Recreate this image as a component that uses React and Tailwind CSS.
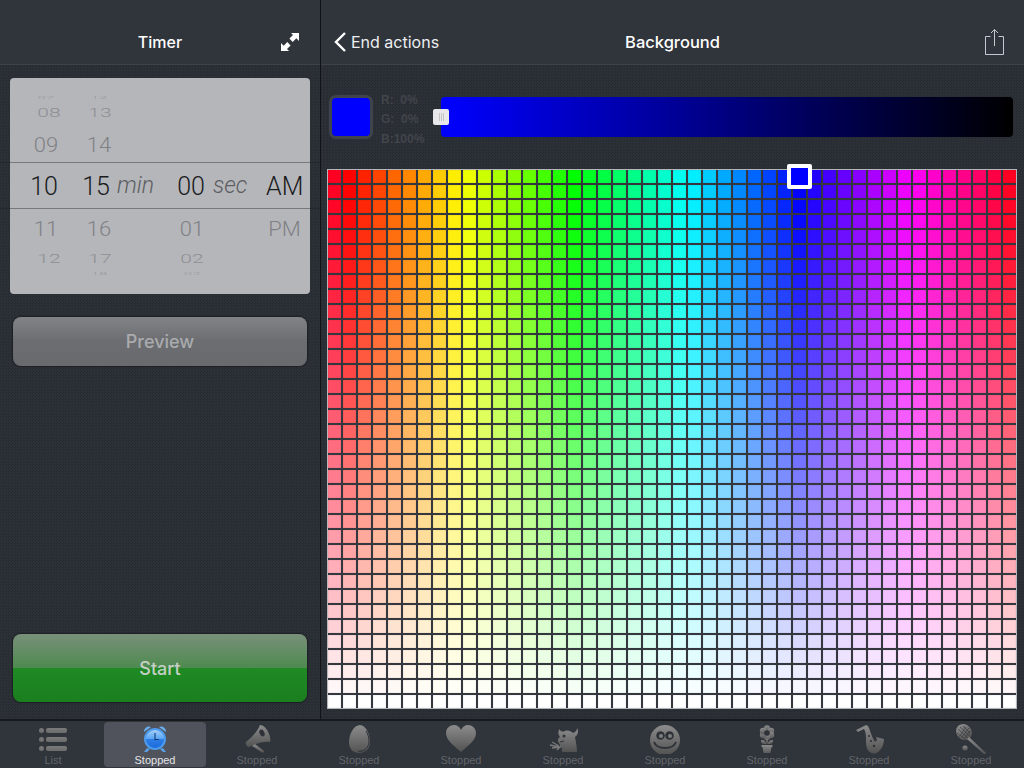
import React from 'react';

const texture = 'bg-[#2c3037] bg-[linear-gradient(45deg,rgba(0,0,0,0.16)_25%,transparent_25%,transparent_75%,rgba(0,0,0,0.16)_75%)] bg-[length:3px_3px]';

const COLS = 46;
const ROWS = 36;

function cellColor(row, col) {
  const hue = (col - 1 + 360) * 8;
  const t = Math.pow(row / (ROWS - 1), 1.3);
  const light = 50 + 50 * t;
  return `hsl(${hue}, 100%, ${light}%)`;
}

function ColorGrid() {
  const cells = [];
  for (let r = 0; r < ROWS; r++) {
    for (let c = 0; c < COLS; c++) {
      cells.push(
        <div key={`${r}-${c}`} className="shadow-[inset_0_0_1px_rgba(0,0,0,0.35)]" style={{ backgroundColor: cellColor(r, c) }} />
      );
    }
  }
  return (
    <div className="relative ml-[6px] w-[690px] border border-[#b4b6ba] bg-[#34373e]">
      <div className="grid grid-cols-[repeat(46,13px)] grid-rows-[repeat(36,13px)] gap-[2px]">{cells}</div>
      <div className="absolute left-[459px] top-[-6px] h-[25px] w-[25px] rounded-[2px] border-[4px] border-white bg-[#0000ff]" />
    </div>
  );
}

const wheelFont = "font-['Roboto',sans-serif] font-light";

function Far({ children, pad }) {
  return <div className={`flex h-full scale-y-[0.58] items-center justify-center text-[21px] text-[#8e8f93] ${pad}`}>{children}</div>;
}

function Near({ children }) {
  return <div className="flex h-full items-center justify-center pt-[5px]"><span className="scale-y-[0.88] text-[22px] text-[#808185]">{children}</span></div>;
}

function Sliver({ children }) {
  return <div className="flex h-full scale-y-[0.22] items-center justify-center text-[15px] text-[#9a9b9f]">{children}</div>;
}

function WheelCol({ w, shift, farShift, items }) {
  return (
    <div className={`grid grid-rows-[8px_22px_38px_47px_36px_26px_7px] ${w}`}>
      <Sliver>{items[0]}</Sliver>
      <Far pad={`pt-[2px] ${farShift}`}>{items[1]}</Far>
      <Near>{items[2]}</Near>
      <div className={`flex items-center justify-center pt-[2px] text-[25px] text-[#1a1b1d] ${shift}`}>{items[3]}</div>
      <Near>{items[4]}</Near>
      <Far pad={`pt-[4px] ${farShift}`}>{items[5]}</Far>
      <Sliver>{items[6]}</Sliver>
    </div>
  );
}

function TimePicker() {
  return (
    <div className="relative mx-[10px] mt-[13px] h-[216px] rounded-[4px] bg-[#b5b6ba] pt-[16px]">
      <div className="absolute left-[-10px] right-[-10px] top-[84px] h-[47px] border-y border-[#1f2126]/60" />
      <div className="absolute left-0 right-0 top-[84px] h-[47px] border-y border-[#77787c]" />
      <div className={`relative flex ${wheelFont}`}>
        <WheelCol w="w-[72px]" shift="pr-[4px]" farShift="pl-[6px]" items={['07', '08', '09', '10', '11', '12', '']} />
        <WheelCol w="w-[34px]" shift="pr-[6px]" farShift="pl-[2px]" items={['12', '13', '14', '15', '16', '17', '18']} />
        <div className="w-[58px]">
          <div className="mt-[68px] flex h-[47px] items-center pl-[1px] pt-[2px] text-[23px] italic text-[#5d5e62]">min</div>
        </div>
        <WheelCol w="w-[36px]" shift="pr-[2px]" farShift="" items={['', '', '', '00', '01', '02', '03']} />
        <div className="w-[56px]">
          <div className="mt-[68px] flex h-[47px] items-center pl-[3px] pt-[2px] text-[23px] italic text-[#5d5e62]">sec</div>
        </div>
        <WheelCol w="w-[36px]" shift="" farShift="" items={['', '', '', 'AM', 'PM', '', '']} />
      </div>
    </div>
  );
}

function GlossButton({ label, h, tone, text }) {
  return (
    <div className={`flex items-center justify-center overflow-hidden rounded-[8px] mx-[13px] shadow-[0_0_1px_1px_rgba(20,22,26,0.6)] ${h} ${tone}`}>
      <span className={`font-['Inter',sans-serif] text-[18px] font-medium ${text}`}>{label}</span>
    </div>
  );
}

function TabSvg({ id, children, from = '#8c8c8c', to = '#525252' }) {
  return (
    <svg width="40" height="32" viewBox="0 0 40 32">
      <defs>
        <linearGradient id={id} x1="0" y1="0" x2="0" y2="1">
          <stop offset="0" stopColor={from} />
          <stop offset="1" stopColor={to} />
        </linearGradient>
      </defs>
      <g fill={`url(#${id})`}>{children}</g>
    </svg>
  );
}

const ListIcon = () => (
  <TabSvg id="g-list" from="#7a7a7a" to="#6c6c6c">
    <rect x="6" y="6" width="5" height="5" rx="2.5" />
    <rect x="13" y="6" width="21" height="5" rx="2" />
    <rect x="6" y="15" width="5" height="5" rx="2.5" />
    <rect x="13" y="15" width="21" height="5" rx="2" />
    <rect x="6" y="24" width="5" height="5" rx="2.5" />
    <rect x="13" y="24" width="21" height="5" rx="2" />
  </TabSvg>
);

const ClockIcon = () => (
  <svg width="40" height="32" viewBox="0 0 40 32">
    <defs>
      <linearGradient id="g-clock" x1="0" y1="0" x2="0" y2="1">
        <stop offset="0" stopColor="#a4cffa" />
        <stop offset="0.48" stopColor="#5aa5f2" />
        <stop offset="0.5" stopColor="#2f7fe6" />
        <stop offset="1" stopColor="#1b6adc" />
      </linearGradient>
    </defs>
    <path d="M9 10a5 5 0 0 1 7-5zM31 10a5 5 0 0 0-7-5z" fill="#6aaef0" />
    <path d="M12 26l-3 4h3l3-3zM28 26l3 4h-3l-3-3z" fill="#5b9fe6" />
    <circle cx="20" cy="17" r="11" fill="#4e9bec" />
    <circle cx="20" cy="17" r="9" fill="url(#g-clock)" />
    <path d="M20 11v6.5h4" fill="none" stroke="#123a78" strokeWidth="1.1" />
  </svg>
);

const HornIcon = () => (
  <TabSvg id="g-horn">
    <path d="M23 3C28 2 35 14 33 20 27 19 18 22 12 25 10 25 8 22 9 20 14 16 20 10 23 3z" />
    <ellipse cx="25" cy="11" rx="2.4" ry="3.6" transform="rotate(-25 25 11)" fill="#2f3239" />
    <path d="M15 24l3-2 9 7-1 2z" />
  </TabSvg>
);

const EggIcon = () => (
  <TabSvg id="g-egg">
    <path d="M21 3c6 0 10 10 10 17 0 7-5 11-11 11S10 27 10 20C10 12 15 3 21 3z" />
    <path d="M27 9c3 5 4 11 2 15-2 4-6 6-10 5" fill="none" stroke="#2a2d33" strokeWidth="1" />
  </TabSvg>
);

const HeartIcon = () => (
  <TabSvg id="g-heart">
    <path d="M20 30C12 23 5 18 5 11c0-5 4-8 8-8 3 0 6 2 7 5 1-3 4-5 7-5 4 0 8 3 8 8 0 7-7 12-15 19z" />
  </TabSvg>
);

const DevilIcon = () => (
  <TabSvg id="g-devil">
    <path d="M16 7C18 10 20 10 22 9 25 8 28 9 30 11 33 10 34 8 34 6 36 9 35 13 32 15 33 20 34 26 34 30L19 30C20 26 17 24 16 21 14 19 15 16 17 15 15 13 15 10 16 8z" />
    <circle cx="21" cy="14" r="1.5" fill="#2f3239" />
    <path d="M17 20l4-1" fill="none" stroke="#2f3239" strokeWidth="1" />
    <path d="M9 20l7 4M7 23l9 2M9 26l8-1M18 24l-4 4" fill="none" stroke="#7a7a7a" strokeWidth="1.3" />
  </TabSvg>
);

const SmileIcon = () => (
  <TabSvg id="g-smile">
    <circle cx="20" cy="18" r="15" />
    <circle cx="15.5" cy="13.5" r="4.3" fill="#2f3239" />
    <circle cx="24.5" cy="13.5" r="4.3" fill="#2f3239" />
    <circle cx="16" cy="14" r="2" fill="#7f7f7f" />
    <circle cx="25" cy="14" r="2" fill="#7f7f7f" />
    <path d="M9 20c3 8 19 8 22 0" fill="none" stroke="#2f3239" strokeWidth="2" />
  </TabSvg>
);

const FlowerIcon = () => (
  <TabSvg id="g-flower" from="#8a8a8a" to="#5a5a5a">
    <circle cx="20" cy="6.5" r="3.2" />
    <circle cx="24" cy="9" r="3.2" />
    <circle cx="24" cy="13" r="3.2" />
    <circle cx="20" cy="15" r="3.2" />
    <circle cx="16" cy="13" r="3.2" />
    <circle cx="16" cy="9" r="3.2" />
    <circle cx="20" cy="11" r="2.8" fill="#2f3239" />
    <path d="M19.3 17h1.4v5h-1.4zM14 18c3 0 5 1 5 4h-1c-3 0-4-1-4-4zM26 18c-3 0-5 1-5 4h1c3 0 4-1 4-4z" />
    <path d="M14.5 23h11v2h-1l-1 6h-7l-1-6h-1z" />
  </TabSvg>
);

const SaxIcon = () => (
  <TabSvg id="g-sax">
    <path d="M7 8L17 3 19 4 20 6C22 12 24 17 26 20L28 18 27 15 35 17C35 22 33 26 31 28 29 31 26 32 23 31 19 30 17 26 17 20 17 14 17 10 15 7L9 10z" />
    <circle cx="20" cy="14" r="1" fill="#2f3239" />
    <circle cx="22" cy="19" r="1.1" fill="#2f3239" />
    <circle cx="25" cy="24" r="1.2" fill="#2f3239" />
  </TabSvg>
);

const RacketIcon = () => (
  <TabSvg id="g-racket">
    <ellipse cx="13" cy="10" rx="7.5" ry="8.5" transform="rotate(-40 13 10)" />
    <g stroke="#2f3239" strokeWidth="0.6" fill="none">
      <path d="M7 7l10 9M9 5l10 9M12 4l7 7M6 11l8 6M10 16l8-10M8 15l7-10M13 17l6-8" />
    </g>
    <path d="M18 15l17 16-1.5 1.5L16 17z" />
    <circle cx="14" cy="26" r="2.6" />
  </TabSvg>
);

const tabs = [
  { label: 'List', Icon: ListIcon },
  { label: 'Stopped', Icon: ClockIcon, active: true },
  { label: 'Stopped', Icon: HornIcon },
  { label: 'Stopped', Icon: EggIcon },
  { label: 'Stopped', Icon: HeartIcon },
  { label: 'Stopped', Icon: DevilIcon },
  { label: 'Stopped', Icon: SmileIcon },
  { label: 'Stopped', Icon: FlowerIcon },
  { label: 'Stopped', Icon: SaxIcon },
  { label: 'Stopped', Icon: RacketIcon },
];

function TabBar() {
  return (
    <div className="grid h-[49px] grid-cols-[repeat(10,102px)] border-t-2 border-[#17191d] bg-[#30343b] pl-[2px] pt-[1px]">
      {tabs.map(({ label, Icon, active }, i) => (
        <div key={i} className={`flex h-[45px] flex-col items-center rounded-[4px] ${active ? 'bg-[#50535b]' : ''}`}>
          <div className="h-[32px]"><Icon /></div>
          <span className={`text-[11px] leading-[13px] ${active ? 'text-[#e4e5e8]' : 'text-[#62656a]'}`}>{label}</span>
        </div>
      ))}
    </div>
  );
}

export default function App() {
  return (
    <div className="flex h-[768px] w-[1024px] flex-col overflow-hidden bg-[#2c3037] font-['Liberation_Sans',sans-serif]">
      <div className="flex h-[719px]">
        <div className={`flex w-[321px] flex-col border-r border-[#101215] ${texture}`}>
          <div className="relative flex h-[65px] items-end justify-center border-b border-[#3e4249] bg-[#30343b] pb-[12px]">
            <span className="font-['Inter',sans-serif] text-[16px] font-medium leading-[20px] text-white">Timer</span>
            <svg className="absolute left-[280px] top-[32px]" width="20" height="20" viewBox="0 0 20 20" fill="#fff">
              <path d="M11 1h8v8l-2.7-2.7-3.6 3.6-3.3-3.3 3.6-3.6zM9 19H1v-8l2.7 2.7 3.6-3.6 3.3 3.3-3.6 3.6z" />
            </svg>
          </div>
          <TimePicker />
          <div className="mt-[23px]">
            <GlossButton
              label="Preview"
              h="h-[49px]"
              tone="bg-[linear-gradient(#828387_0%,#6c6d71_50%,#696a6e_100%)]"
              text="text-[#a9abae]"
            />
          </div>
          <div className="mt-auto mb-[17px]">
            <GlossButton
              label="Start"
              h="h-[68px]"
              tone="bg-[linear-gradient(#79907a_0%,#4e8a4f_50%,#1f8a24_50%,#1a7f1f_100%)]"
              text="text-[#c5d0c5]"
            />
          </div>
        </div>
        <div className={`flex flex-1 flex-col ${texture}`}>
          <div className="relative flex h-[65px] items-end justify-center border-b border-[#3e4249] bg-[#30343b] pb-[12px]">
            <div className="absolute left-[12px] top-[30px] flex items-center">
              <svg width="14" height="22" viewBox="0 0 14 22" fill="none" stroke="#fff" strokeWidth="2.4">
                <path d="M12 2L3 11l9 9" />
              </svg>
              <span className="ml-[4px] font-['Inter',sans-serif] text-[16px] text-[#eceef0]">End actions</span>
            </div>
            <span className="font-['Inter',sans-serif] text-[16.5px] font-medium leading-[20px] text-white">Background</span>
            <svg className="absolute right-[20px] top-[28px]" width="20" height="28" viewBox="0 0 20 28" fill="none" stroke="#c4c8d0" strokeWidth="1">
              <path d="M6.5 8.5H1.5v18h18v-18h-5M10.5 18V1.5M7 5l3.5-3.5L14 5" />
            </svg>
          </div>
          <div className="mt-[31px] flex h-[42px] items-center pl-[8px]">
            <div className="h-[44px] w-[44px] rounded-[7px] border-[3px] border-[#3f434b] bg-[#0000ff]" />
            <div className="ml-[8px] w-[60px] pt-[6px] text-[12px] font-bold leading-[19.5px] text-[#42454b]">
              <div>R:&nbsp; 0%</div>
              <div>G:&nbsp; 0%</div>
              <div>B:100%</div>
            </div>
            <div className="relative h-[40px] w-[572px] rounded-[4px] bg-[linear-gradient(to_right,#0000ff,#000000)]">
              <div className="absolute left-[-8px] top-[12px] flex h-[16px] w-[16px] items-center justify-center gap-[1px] rounded-[2px] bg-[#e8e8ea]">
                <span className="h-[8px] w-px bg-[#c4c4c6]" />
                <span className="h-[8px] w-px bg-[#c4c4c6]" />
                <span className="h-[8px] w-px bg-[#c4c4c6]" />
              </div>
            </div>
          </div>
          <div className="mt-[31px]">
            <ColorGrid />
          </div>
        </div>
      </div>
      <TabBar />
    </div>
  );
}
